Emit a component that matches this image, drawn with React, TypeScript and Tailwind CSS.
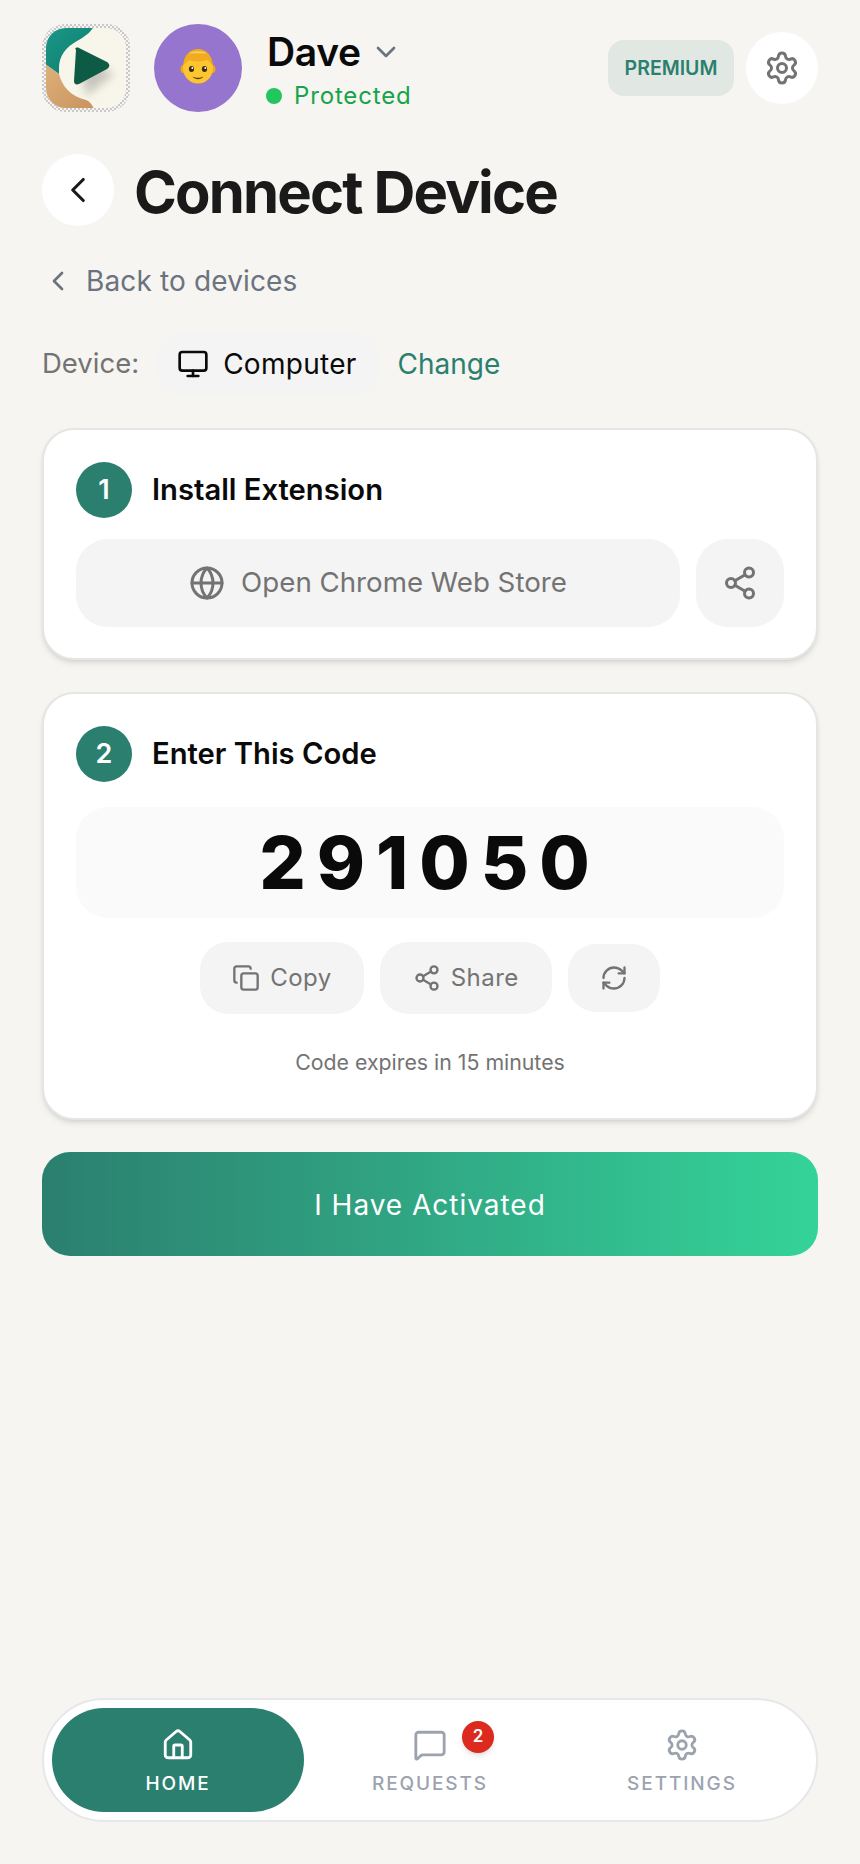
import { ChevronDown, ChevronLeft, Copy, Globe, House, MessageSquare, Monitor, RefreshCw, Settings, Share2 } from 'lucide-react';

function AppLogo() {
  return (
    <svg width="88" height="88" viewBox="0 0 88 88" className="shrink-0">
      <defs>
        <pattern id="checker" width="4" height="4" patternUnits="userSpaceOnUse">
          <rect width="4" height="4" fill="#f6f5f1" />
          <rect width="2" height="2" fill="#c9c9c9" />
          <rect x="2" y="2" width="2" height="2" fill="#c9c9c9" />
        </pattern>
        <linearGradient id="teal" x1="0" y1="0" x2="1" y2="1">
          <stop offset="0" stopColor="#1a9a8a" />
          <stop offset="1" stopColor="#107a6c" />
        </linearGradient>
        <linearGradient id="sand" x1="0" y1="0" x2="1" y2="1">
          <stop offset="0" stopColor="#dfb27c" />
          <stop offset="1" stopColor="#c8925c" />
        </linearGradient>
        <filter id="playShadow" x="-50%" y="-50%" width="200%" height="200%">
          <feGaussianBlur stdDeviation="5" />
        </filter>
        <clipPath id="logoClip">
          <rect x="4" y="4" width="80" height="80" rx="20" />
        </clipPath>
      </defs>
      <rect width="88" height="88" rx="23" fill="url(#checker)" />
      <g clipPath="url(#logoClip)">
        <rect width="88" height="88" fill="#f8f5ea" />
        <path d="M0 0H53C49 9 42 13 35 17C24 23 17 32 17 44V50L0 38Z" fill="url(#teal)" />
        <path d="M0 38L17 50C20 62 28 72 44 76C49 78 51 82 53 88H0Z" fill="url(#sand)" />
        <path d="M38 32L72 50L44 72Z" fill="#000" opacity="0.2" filter="url(#playShadow)" />
      </g>
      <path d="M34 26C32 24 35 23 37 24L65 38C68 40 68 43 65 45L37 60C34 61 32 60 32 57Z" fill="#0d5a45" />
    </svg>
  );
}

function BoyEmoji() {
  return (
    <svg width="36" height="36" viewBox="0 0 36 36" className="mb-1">
      <ellipse cx="3.5" cy="21" rx="3" ry="4" fill="#f5a70f" />
      <ellipse cx="32.5" cy="21" rx="3" ry="4" fill="#f5a70f" />
      <ellipse cx="18" cy="20" rx="15" ry="15.5" fill="#fdc62f" />
      <path d="M3.5 19C2.5 8 10 1 18 1S33.500 8 32.5 19C31.500 15 29 12.500 26 12C21 14 14 14 10 12C7 13 4.500 15 3.500 19Z" fill="#f2ab1e" />
      <path d="M9 5.500C14 2.500 22 2.500 27 5.500C22 5 14 5 9 5.500Z" fill="#f9d264" />
      <ellipse cx="11.500" cy="21" rx="2.600" ry="3" fill="#3b2a1a" />
      <ellipse cx="24.500" cy="21" rx="2.600" ry="3" fill="#3b2a1a" />
      <circle cx="12.300" cy="20" r="1" fill="#fff" />
      <circle cx="25.300" cy="20" r="1" fill="#fff" />
      <path d="M12.500 28.500C15.500 30.200 20.500 30.200 23.500 28.500C21 32 15 32 12.500 28.500Z" fill="#5b3a12" />
    </svg>
  );
}

function StepHeader({ n, title }: { n: number; title: string }) {
  return (
    <div className="flex items-center gap-5">
      <div className="flex h-14 w-14 items-center justify-center rounded-full bg-[#2b7f6f] text-[27px] font-semibold text-white">{n}</div>
      <h2 className="text-[29.2px] font-semibold leading-[42px] text-[#0a0a0a]">{title}</h2>
    </div>
  );
}

function NavItem({ icon, label, active, badge }: { icon: React.ReactNode; label: string; active?: boolean; badge?: number }) {
  return (
    <div className={`relative flex flex-1 flex-col items-center justify-center gap-[10px] rounded-full pt-1 ${active ? 'bg-[#2b7f6f] text-white' : 'text-[#9ca3af]'}`}>
      <div className="relative">
        {icon}
        {badge && (
          <span className="absolute -right-[47px] -top-[7px] flex h-8 w-8 items-center justify-center rounded-full bg-[#dc2b1e] text-[17px] font-semibold text-white shadow-md">{badge}</span>
        )}
      </div>
      <span className="text-[19px] font-medium leading-6 tracking-[0.1em]">{label}</span>
    </div>
  );
}

export default function App() {
  return (
    <div className="flex h-[1864px] w-[860px] flex-col overflow-hidden bg-[#f6f5f1] px-[42px] pb-[42px] pt-6 font-['Inter',sans-serif]">
      <header className="flex items-center justify-between">
        <div className="flex items-center gap-6">
          <AppLogo />
          <div className="flex h-[88px] w-[88px] items-center justify-center rounded-full bg-[#9575cd]"><BoyEmoji /></div>
          <div className="pl-px pt-[5px]">
            <div className="flex items-center gap-[9px]">
              <span className="text-[39px] font-semibold leading-[46px] tracking-[-0.01em] text-[#0a0a0a]">Dave</span>
              <ChevronDown size={32} className="text-[#6b7280]" />
            </div>
            <div className="mt-[5px] -ml-px flex items-center gap-3">
              <span className="h-4 w-4 rounded-full bg-[#22c55e]" />
              <span className="text-[24px] leading-8 tracking-[0.035em] text-[#16a34a]">Protected</span>
            </div>
          </div>
        </div>
        <div className="flex items-center gap-3">
          <span className="flex h-14 w-[126px] items-center justify-center rounded-2xl bg-[#e1e8e3] pt-px text-[19.5px] font-semibold text-[#2b7f6f]">PREMIUM</span>
          <button className="flex h-[72px] w-[72px] items-center justify-center rounded-full bg-white text-[#737373]"><Settings size={36} /></button>
        </div>
      </header>

      <div className="mt-[42px] flex items-center gap-5">
        <button className="flex h-[72px] w-[72px] items-center justify-center rounded-full bg-white text-[#1a1a1a]"><ChevronLeft size={42} strokeWidth={1.8} /></button>
        <h1 className="pt-1 text-[58px] font-bold leading-[68px] tracking-[-0.032em] text-[#1a1a1a]">Connect Device</h1>
      </div>

      <div className="mt-[37px] flex items-center gap-3 text-[#6b7280]">
        <ChevronLeft size={32} />
        <span className="text-[28px] leading-9 tracking-[0.005em]">Back to devices</span>
      </div>

      <div className="mt-[33px] flex items-center gap-[17px] text-[28px]">
        <span className="text-[27.5px] text-[#737373]">Device:</span>
        <span className="flex h-16 items-center gap-[14px] rounded-full bg-[#f4f4f4] pl-[21px] pr-6 tracking-[0.01em] text-[#0a0a0a]"><Monitor size={32} />Computer</span>
        <span className="text-[#2b7f6f]">Change</span>
      </div>

      <section className="mt-8 rounded-[32px] border-2 border-[#e5e5e3] bg-white px-8 pb-[31px] pt-8 shadow-md">
        <StepHeader n={1} title="Install Extension" />
        <div className="mt-[21px] flex gap-4">
          <button className="flex h-[88px] flex-1 items-center justify-center gap-4 rounded-[32px] bg-[#f4f4f4] text-[27.7px] text-[#737373]"><Globe size={36} />Open Chrome Web Store</button>
          <button className="flex h-[88px] w-[88px] items-center justify-center rounded-[32px] bg-[#f4f4f4] text-[#737373]"><Share2 size={36} /></button>
        </div>
      </section>

      <section className="mt-8 rounded-[32px] border-2 border-[#e5e5e3] bg-white px-8 pb-[39px] pt-8 shadow-md">
        <StepHeader n={2} title="Enter This Code" />
        <div className="mt-[25px] flex h-[111px] items-center justify-center rounded-[32px] bg-[#fafafa] text-[73px] font-extrabold tracking-[0.15em] text-[#0a0a0a]">291050</div>
        <div className="mt-6 flex items-center justify-center gap-4">
          <button className="flex h-[72px] items-center gap-[10px] rounded-[28px] bg-[#f4f4f4] px-8 text-[24px] tracking-[0.02em] text-[#737373]"><Copy size={28} />Copy</button>
          <button className="flex h-[72px] items-center gap-[10px] rounded-[28px] bg-[#f4f4f4] px-[33px] text-[24px] tracking-[0.02em] text-[#737373]"><Share2 size={28} />Share</button>
          <button className="flex h-[68px] w-[92px] items-center justify-center rounded-[28px] bg-[#f4f4f4] text-[#737373]"><RefreshCw size={28} /></button>
        </div>
        <p className="mt-[33px] text-center text-[21.3px] text-[#737373]">Code expires in 15 minutes</p>
      </section>

      <button className="mt-8 h-[104px] rounded-[28px] bg-linear-to-r from-[#2b7f6f] to-[#34d399] pt-[3px] text-[28px] font-normal tracking-[0.035em] text-white">I Have Activated</button>

      <nav className="mt-auto flex h-[124px] rounded-full border-2 border-[#e5e7eb] bg-white p-2">
        <NavItem active icon={<House size={34} />} label="HOME" />
        <NavItem icon={<MessageSquare size={34} />} label="REQUESTS" badge={2} />
        <NavItem icon={<Settings size={34} />} label="SETTINGS" />
      </nav>
    </div>
  );
}
